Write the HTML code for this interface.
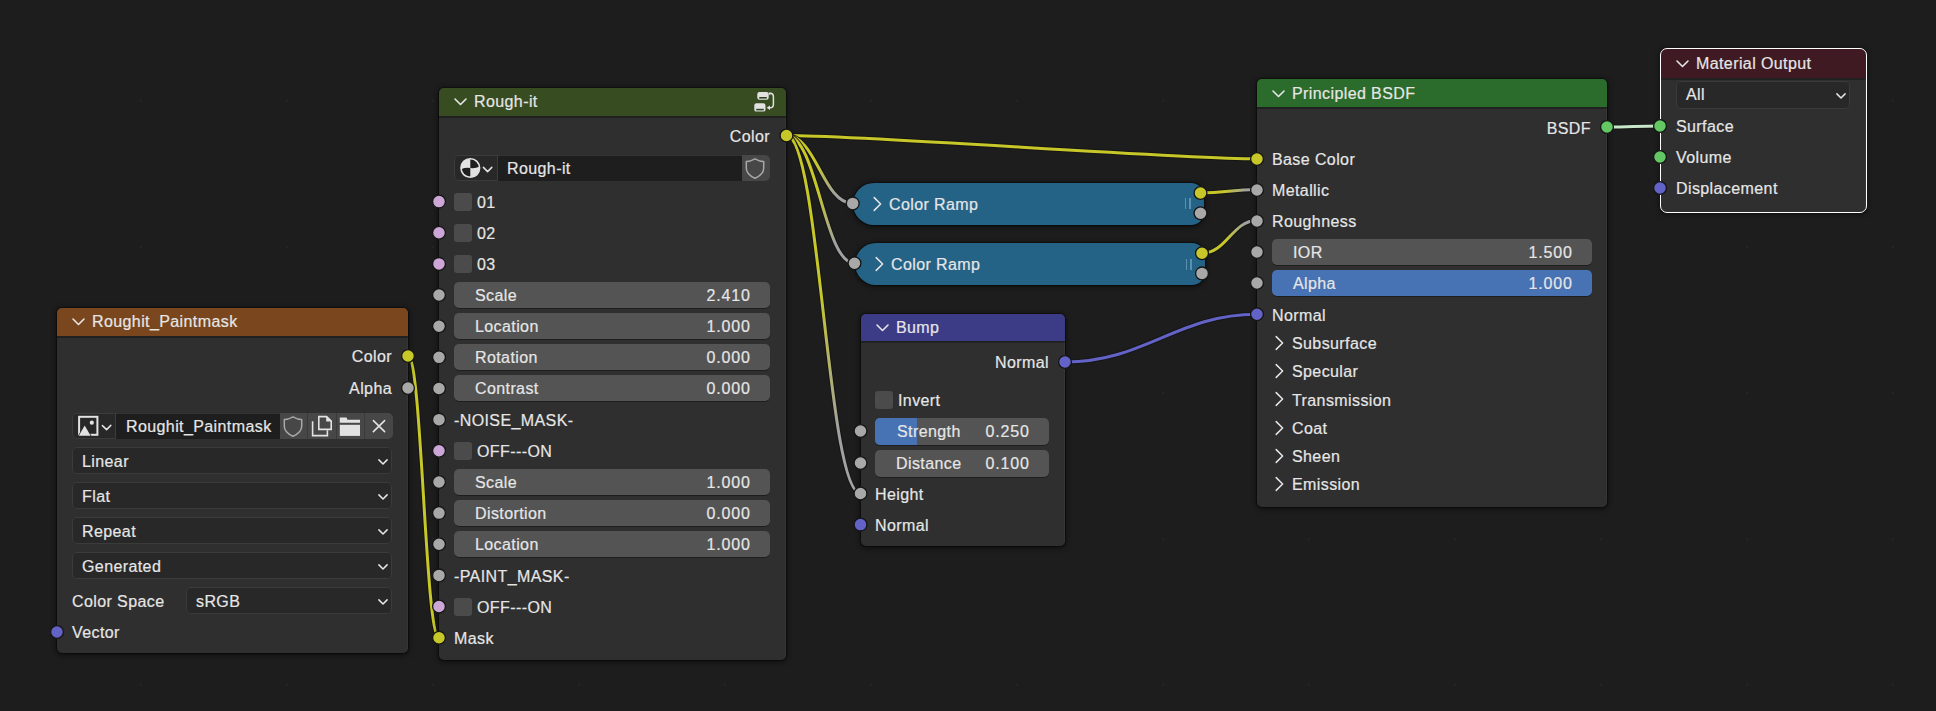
<!DOCTYPE html>
<html><head><meta charset="utf-8"><style>
html,body{margin:0;padding:0;width:1936px;height:711px;overflow:hidden;background:#1d1d1d;}
body{position:relative;font-family:"Liberation Sans", sans-serif;}
.links{position:absolute;left:0;top:0;z-index:1}
.socks{position:absolute;left:0;top:0;z-index:50}
#nodes>div,#nodes>svg{position:absolute}
#nodes{position:absolute;left:0;top:0;width:1936px;height:711px;z-index:2}
.node{background:#2f2f2f;border-radius:5px;overflow:hidden;box-shadow:0 0 0 1px rgba(0,0,0,0.3),0 1px 5px 1px rgba(0,0,0,0.55),inset -1px 0 0 rgba(255,255,255,0.035)}
.hdr{position:absolute;left:0;top:0;right:0;}
.hsep{position:absolute;left:0;right:0;height:2px;background:rgba(0,0,0,0.28)}
.sel{border:1px solid #ffffff;border-radius:7px;}
.t{position:absolute;height:20px;line-height:20px;font-size:16px;letter-spacing:0.4px;white-space:pre;color:#e6e6e6;-webkit-text-stroke:0.2px #e6e6e6}
.sl{border-radius:5px;overflow:hidden;box-shadow:0 1px 0 rgba(0,0,0,0.35)}
.cb{width:18px;height:18px;border-radius:3px;background:#4b4b4b}
.dd{background:#282828;border-radius:5px;box-shadow:inset 0 0 0 1px #3b3b3b}
.ramp{background:#256386;border-radius:21px 13px 13px 21px;box-shadow:0 0 0 1px rgba(0,0,0,0.3),0 1px 5px 1px rgba(0,0,0,0.55)}
.ic{position:absolute}
</style></head><body>
<svg class="links" width="1936" height="711"><circle cx="141.0" cy="101.0" r="1.2" fill="#252525"/><circle cx="141.0" cy="247.0" r="1.2" fill="#252525"/><circle cx="141.0" cy="393.0" r="1.2" fill="#252525"/><circle cx="141.0" cy="539.0" r="1.2" fill="#252525"/><circle cx="141.0" cy="685.0" r="1.2" fill="#252525"/><circle cx="287.0" cy="101.0" r="1.2" fill="#252525"/><circle cx="287.0" cy="247.0" r="1.2" fill="#252525"/><circle cx="287.0" cy="393.0" r="1.2" fill="#252525"/><circle cx="287.0" cy="539.0" r="1.2" fill="#252525"/><circle cx="287.0" cy="685.0" r="1.2" fill="#252525"/><circle cx="433.0" cy="101.0" r="1.2" fill="#252525"/><circle cx="433.0" cy="247.0" r="1.2" fill="#252525"/><circle cx="433.0" cy="393.0" r="1.2" fill="#252525"/><circle cx="433.0" cy="539.0" r="1.2" fill="#252525"/><circle cx="433.0" cy="685.0" r="1.2" fill="#252525"/><circle cx="579.0" cy="101.0" r="1.2" fill="#252525"/><circle cx="579.0" cy="247.0" r="1.2" fill="#252525"/><circle cx="579.0" cy="393.0" r="1.2" fill="#252525"/><circle cx="579.0" cy="539.0" r="1.2" fill="#252525"/><circle cx="579.0" cy="685.0" r="1.2" fill="#252525"/><circle cx="725.0" cy="101.0" r="1.2" fill="#252525"/><circle cx="725.0" cy="247.0" r="1.2" fill="#252525"/><circle cx="725.0" cy="393.0" r="1.2" fill="#252525"/><circle cx="725.0" cy="539.0" r="1.2" fill="#252525"/><circle cx="725.0" cy="685.0" r="1.2" fill="#252525"/><circle cx="871.0" cy="101.0" r="1.2" fill="#252525"/><circle cx="871.0" cy="247.0" r="1.2" fill="#252525"/><circle cx="871.0" cy="393.0" r="1.2" fill="#252525"/><circle cx="871.0" cy="539.0" r="1.2" fill="#252525"/><circle cx="871.0" cy="685.0" r="1.2" fill="#252525"/><circle cx="1017.0" cy="101.0" r="1.2" fill="#252525"/><circle cx="1017.0" cy="247.0" r="1.2" fill="#252525"/><circle cx="1017.0" cy="393.0" r="1.2" fill="#252525"/><circle cx="1017.0" cy="539.0" r="1.2" fill="#252525"/><circle cx="1017.0" cy="685.0" r="1.2" fill="#252525"/><circle cx="1163.0" cy="101.0" r="1.2" fill="#252525"/><circle cx="1163.0" cy="247.0" r="1.2" fill="#252525"/><circle cx="1163.0" cy="393.0" r="1.2" fill="#252525"/><circle cx="1163.0" cy="539.0" r="1.2" fill="#252525"/><circle cx="1163.0" cy="685.0" r="1.2" fill="#252525"/><circle cx="1309.0" cy="101.0" r="1.2" fill="#252525"/><circle cx="1309.0" cy="247.0" r="1.2" fill="#252525"/><circle cx="1309.0" cy="393.0" r="1.2" fill="#252525"/><circle cx="1309.0" cy="539.0" r="1.2" fill="#252525"/><circle cx="1309.0" cy="685.0" r="1.2" fill="#252525"/><circle cx="1455.0" cy="101.0" r="1.2" fill="#252525"/><circle cx="1455.0" cy="247.0" r="1.2" fill="#252525"/><circle cx="1455.0" cy="393.0" r="1.2" fill="#252525"/><circle cx="1455.0" cy="539.0" r="1.2" fill="#252525"/><circle cx="1455.0" cy="685.0" r="1.2" fill="#252525"/><circle cx="1601.0" cy="101.0" r="1.2" fill="#252525"/><circle cx="1601.0" cy="247.0" r="1.2" fill="#252525"/><circle cx="1601.0" cy="393.0" r="1.2" fill="#252525"/><circle cx="1601.0" cy="539.0" r="1.2" fill="#252525"/><circle cx="1601.0" cy="685.0" r="1.2" fill="#252525"/><circle cx="1747.0" cy="101.0" r="1.2" fill="#252525"/><circle cx="1747.0" cy="247.0" r="1.2" fill="#252525"/><circle cx="1747.0" cy="393.0" r="1.2" fill="#252525"/><circle cx="1747.0" cy="539.0" r="1.2" fill="#252525"/><circle cx="1747.0" cy="685.0" r="1.2" fill="#252525"/><circle cx="1893.0" cy="101.0" r="1.2" fill="#252525"/><circle cx="1893.0" cy="247.0" r="1.2" fill="#252525"/><circle cx="1893.0" cy="393.0" r="1.2" fill="#252525"/><circle cx="1893.0" cy="539.0" r="1.2" fill="#252525"/><circle cx="1893.0" cy="685.0" r="1.2" fill="#252525"/><path d="M408 356 C421.95 356 425.05 637.5 439 637.5" stroke="#141414" stroke-width="5.0" fill="none" stroke-opacity="0.85"/><path d="M408 356 C421.95 356 425.05 637.5 439 637.5" stroke="#c7c729" stroke-width="3.0" fill="none"/><path d="M786.5 135.5 C866.5 135.5 1177 158.8 1257 158.8" stroke="#141414" stroke-width="5.0" fill="none" stroke-opacity="0.85"/><path d="M786.5 135.5 C866.5 135.5 1177 158.8 1257 158.8" stroke="#c7c729" stroke-width="3.0" fill="none"/><linearGradient id="g2" gradientUnits="userSpaceOnUse" x1="786.5" y1="135.5" x2="852.7" y2="203.4"><stop offset="0" stop-color="#c7c729"/><stop offset="0.42" stop-color="#c7c729"/><stop offset="0.82" stop-color="#a1a1a1"/><stop offset="1" stop-color="#a1a1a1"/></linearGradient><path d="M786.5 135.5 C816.29 135.5 822.9100000000001 203.4 852.7 203.4" stroke="#141414" stroke-width="5.0" fill="none" stroke-opacity="0.85"/><path d="M786.5 135.5 C816.29 135.5 822.9100000000001 203.4 852.7 203.4" stroke="url(#g2)" stroke-width="3.0" fill="none"/><linearGradient id="g3" gradientUnits="userSpaceOnUse" x1="786.5" y1="135.5" x2="854.5" y2="263.3"><stop offset="0" stop-color="#c7c729"/><stop offset="0.42" stop-color="#c7c729"/><stop offset="0.82" stop-color="#a1a1a1"/><stop offset="1" stop-color="#a1a1a1"/></linearGradient><path d="M786.5 135.5 C817.1 135.5 823.9 263.3 854.5 263.3" stroke="#141414" stroke-width="5.0" fill="none" stroke-opacity="0.85"/><path d="M786.5 135.5 C817.1 135.5 823.9 263.3 854.5 263.3" stroke="url(#g3)" stroke-width="3.0" fill="none"/><linearGradient id="g4" gradientUnits="userSpaceOnUse" x1="786.5" y1="135.5" x2="860.5" y2="493.5"><stop offset="0" stop-color="#c7c729"/><stop offset="0.42" stop-color="#c7c729"/><stop offset="0.82" stop-color="#a1a1a1"/><stop offset="1" stop-color="#a1a1a1"/></linearGradient><path d="M786.5 135.5 C819.8 135.5 827.2 493.5 860.5 493.5" stroke="#141414" stroke-width="5.0" fill="none" stroke-opacity="0.85"/><path d="M786.5 135.5 C819.8 135.5 827.2 493.5 860.5 493.5" stroke="url(#g4)" stroke-width="3.0" fill="none"/><linearGradient id="g5" gradientUnits="userSpaceOnUse" x1="1200.5" y1="193" x2="1257" y2="189.5"><stop offset="0" stop-color="#c7c729"/><stop offset="0.42" stop-color="#c7c729"/><stop offset="0.82" stop-color="#a1a1a1"/><stop offset="1" stop-color="#a1a1a1"/></linearGradient><path d="M1200.5 193 C1225.925 193 1231.575 189.5 1257 189.5" stroke="#141414" stroke-width="5.0" fill="none" stroke-opacity="0.85"/><path d="M1200.5 193 C1225.925 193 1231.575 189.5 1257 189.5" stroke="url(#g5)" stroke-width="3.0" fill="none"/><linearGradient id="g6" gradientUnits="userSpaceOnUse" x1="1202" y1="253.2" x2="1257" y2="220.5"><stop offset="0" stop-color="#c7c729"/><stop offset="0.42" stop-color="#c7c729"/><stop offset="0.82" stop-color="#a1a1a1"/><stop offset="1" stop-color="#a1a1a1"/></linearGradient><path d="M1202 253.2 C1226.75 253.2 1232.25 220.5 1257 220.5" stroke="#141414" stroke-width="5.0" fill="none" stroke-opacity="0.85"/><path d="M1202 253.2 C1226.75 253.2 1232.25 220.5 1257 220.5" stroke="url(#g6)" stroke-width="3.0" fill="none"/><path d="M1065 362 C1145 362 1177 314.3 1257 314.3" stroke="#141414" stroke-width="5.0" fill="none" stroke-opacity="0.85"/><path d="M1065 362 C1145 362 1177 314.3 1257 314.3" stroke="#6363c7" stroke-width="3.0" fill="none"/><path d="M1607 127 C1630.85 127 1636.15 126 1660 126" stroke="#141414" stroke-width="5.0" fill="none" stroke-opacity="0.85"/><path d="M1607 127 C1630.85 127 1636.15 126 1660 126" stroke="#c8e6c8" stroke-width="3.0" fill="none"/></svg>
<div id="nodes">
<div class="node" style="left:57px;top:308px;width:351px;height:345px"><div class="hdr" style="height:28px;background:#7a461d"></div><div class="hsep" style="top:28px"></div></div>
<svg class="ic" style="left:71px;top:316.0px" width="16" height="12"><path d="M2 3 L7.5 8.5 L13 3" fill="none" stroke="#e6e6e6" stroke-width="1.6" stroke-linecap="round" stroke-linejoin="round"/></svg>
<div class="t" style="left:92px;top:312.2px;color:#e6e6e6">Roughit_Paintmask</div>
<div class="t" style="right:1544px;top:347px;color:#e6e6e6">Color</div>
<div class="t" style="right:1544px;top:379px;color:#e6e6e6">Alpha</div>
<div class="dd" style="left:72px;top:413px;width:44px;height:26px;border-radius:5px 0 0 5px;background:#282828"></div>
<div style="position:absolute;left:115px;top:413px;width:1px;height:26px;background:#3c3c3c"></div>
<div style="position:absolute;left:116px;top:413px;width:164px;height:26px;background:#1e1e1e;box-shadow:inset 0 1px 0 #333"></div>
<div style="position:absolute;left:280px;top:413px;width:113px;height:26px;background:#474747;border-radius:0 5px 5px 0"></div>
<div style="position:absolute;left:307px;top:413px;width:1px;height:26px;background:#3a3a3a"></div>
<div style="position:absolute;left:336px;top:413px;width:1px;height:26px;background:#3a3a3a"></div>
<div style="position:absolute;left:364px;top:413px;width:1px;height:26px;background:#3a3a3a"></div>
<svg class="ic" style="left:72px;top:413px" width="43" height="26" viewBox="0 0 43 26"><rect x="7.1" y="3.8" width="18.3" height="18" fill="none" stroke="#e2e2e2" stroke-width="2"/><path d="M5.6 23.6 L12.7 11.2 L19.8 23.6 Z" fill="#282828"/><path d="M6.8 22.8 L12.7 12.6 L18.6 22.8 Z" fill="#e2e2e2"/><circle cx="19.8" cy="9.7" r="2.1" fill="#e2e2e2"/><path d="M30.4 12.6 L34.6 16.6 L38.8 12.4" fill="none" stroke="#e2e2e2" stroke-width="1.5" stroke-linecap="round" stroke-linejoin="round"/></svg>
<svg class="ic" style="left:280px;top:413px" width="28" height="26" viewBox="0 0 28 26"><path d="M13 3.8 Q8.5 6.3 4.3 6.6 V13.2 C4.3 17.8 8 21 13 23.2 C18 21 21.7 17.8 21.7 13.2 V6.6 Q17.5 6.3 13 3.8 Z" fill="none" stroke="#a8a8a8" stroke-width="1.5" stroke-linejoin="round"/></svg>
<svg class="ic" style="left:307px;top:413px" width="29" height="26" viewBox="0 0 29 26"><path d="M5.6 8.3 V22.6 H20.4 V17.2" fill="none" stroke="#e2e2e2" stroke-width="1.6"/><path d="M11.8 3.6 H19.6 L24.2 8.2 V16.4 H11.8 Z" fill="none" stroke="#e2e2e2" stroke-width="1.6" stroke-linejoin="miter"/><path d="M19.2 3 L24.8 8.6 H19.2 Z" fill="#e2e2e2"/></svg>
<svg class="ic" style="left:336px;top:413px" width="29" height="26" viewBox="0 0 29 26"><path d="M3.8 4.6 H10.6 L11.4 6.8 H24 V9.8 H3.8 Z" fill="#e2e2e2"/><rect x="3.8" y="11.8" width="20.2" height="11.1" fill="#e2e2e2"/></svg>
<svg class="ic" style="left:364.5px;top:413px" width="28" height="26" viewBox="0 0 28 26"><path d="M8.4 7.6 L19.6 18.6 M19.6 7.6 L8.4 18.6" stroke="#e2e2e2" stroke-width="1.6" stroke-linecap="round"/></svg>
<div class="t" style="left:126px;top:417px;color:#e6e6e6">Roughit_Paintmask</div>
<div class="dd" style="left:72px;top:447px;width:320px;height:27px"></div>
<div class="t" style="left:82px;top:452px;color:#e6e6e6">Linear</div>
<svg class="ic" style="left:377.4px;top:457.7px" width="12" height="8"><path d="M1.9 1.9 L6 6 L10.1 1.9" fill="none" stroke="#e6e6e6" stroke-width="1.5" stroke-linecap="round" stroke-linejoin="round"/></svg>
<div class="dd" style="left:72px;top:482px;width:320px;height:27px"></div>
<div class="t" style="left:82px;top:487px;color:#e6e6e6">Flat</div>
<svg class="ic" style="left:377.4px;top:492.7px" width="12" height="8"><path d="M1.9 1.9 L6 6 L10.1 1.9" fill="none" stroke="#e6e6e6" stroke-width="1.5" stroke-linecap="round" stroke-linejoin="round"/></svg>
<div class="dd" style="left:72px;top:517px;width:320px;height:27px"></div>
<div class="t" style="left:82px;top:522px;color:#e6e6e6">Repeat</div>
<svg class="ic" style="left:377.4px;top:527.7px" width="12" height="8"><path d="M1.9 1.9 L6 6 L10.1 1.9" fill="none" stroke="#e6e6e6" stroke-width="1.5" stroke-linecap="round" stroke-linejoin="round"/></svg>
<div class="dd" style="left:72px;top:552px;width:320px;height:27px"></div>
<div class="t" style="left:82px;top:557px;color:#e6e6e6">Generated</div>
<svg class="ic" style="left:377.4px;top:562.7px" width="12" height="8"><path d="M1.9 1.9 L6 6 L10.1 1.9" fill="none" stroke="#e6e6e6" stroke-width="1.5" stroke-linecap="round" stroke-linejoin="round"/></svg>
<div class="t" style="left:72px;top:592px;color:#e6e6e6">Color Space</div>
<div class="dd" style="left:186px;top:587px;width:206px;height:27px"></div>
<div class="t" style="left:196px;top:592px;color:#e6e6e6">sRGB</div>
<svg class="ic" style="left:377.4px;top:597.7px" width="12" height="8"><path d="M1.9 1.9 L6 6 L10.1 1.9" fill="none" stroke="#e6e6e6" stroke-width="1.5" stroke-linecap="round" stroke-linejoin="round"/></svg>
<div class="t" style="left:72px;top:623px;color:#e6e6e6">Vector</div>
<div class="node" style="left:439px;top:88px;width:347px;height:572px"><div class="hdr" style="height:28px;background:#374c21"></div><div class="hsep" style="top:28px"></div></div>
<svg class="ic" style="left:453px;top:96.0px" width="16" height="12"><path d="M2 3 L7.5 8.5 L13 3" fill="none" stroke="#e6e6e6" stroke-width="1.6" stroke-linecap="round" stroke-linejoin="round"/></svg>
<div class="t" style="left:474px;top:92.2px;color:#e6e6e6">Rough-it</div>
<div class="t" style="right:1166px;top:127px;color:#e6e6e6">Color</div>
<div class="dd" style="left:454px;top:155px;width:44px;height:26px;border-radius:5px 0 0 5px;background:#282828"></div>
<div style="position:absolute;left:497px;top:155px;width:1px;height:26px;background:#3c3c3c"></div>
<div style="position:absolute;left:498px;top:155px;width:244px;height:26px;background:#1e1e1e;box-shadow:inset 0 1px 0 #333"></div>
<div style="position:absolute;left:742px;top:155px;width:28px;height:26px;background:#474747;border-radius:0 5px 5px 0"></div>
<svg class="ic" style="left:454px;top:155px" width="43" height="26" viewBox="0 0 43 26"><circle cx="16.3" cy="13" r="9.3" fill="#1e1e1e" stroke="#e2e2e2" stroke-width="1.6"/><path d="M16.3 13 V3.7 A9.3 9.3 0 0 0 7.1 14.3 Q11 12.4 16.3 13 Z" fill="#e2e2e2"/><path d="M16.3 13 V22.3 A9.3 9.3 0 0 0 25.5 11.8 Q21 13.6 16.3 13 Z" fill="#e2e2e2"/><path d="M29.4 12.4 L33.6 16.6 L37.8 12.4" fill="none" stroke="#e2e2e2" stroke-width="1.5" stroke-linecap="round" stroke-linejoin="round"/></svg>
<svg class="ic" style="left:742px;top:155px" width="28" height="26" viewBox="0 0 28 26"><path d="M13 3.8 Q8.5 6.3 4.3 6.6 V13.2 C4.3 17.8 8 21 13 23.2 C18 21 21.7 17.8 21.7 13.2 V6.6 Q17.5 6.3 13 3.8 Z" fill="none" stroke="#a8a8a8" stroke-width="1.5" stroke-linejoin="round"/></svg>
<svg class="ic" style="left:748px;top:88px" width="32" height="28" viewBox="0 0 32 28"><rect x="9.3" y="3.9" width="11.4" height="7.8" rx="2.2" fill="#e2e2e2"/><rect x="11.2" y="9" width="7.6" height="1.6" fill="#2f4520"/><rect x="6.3" y="15.3" width="11.2" height="8.3" rx="2.2" fill="#e2e2e2"/><rect x="8.2" y="20.8" width="7.6" height="1.6" fill="#2f4520"/><path d="M22 5.2 Q25.4 5.2 25.4 8.5 V16.5 Q25.4 19.8 22 19.8 H20.5" fill="none" stroke="#e2e2e2" stroke-width="1.5"/><path d="M18.6 19.8 L22 17.6 V22 Z" fill="#e2e2e2"/><path d="M22.2 4 L22.2 7.8 L20.4 5.2 Z" fill="#e2e2e2"/></svg>
<div class="t" style="left:507px;top:159px;color:#e6e6e6">Rough-it</div>
<div class="cb" style="left:454px;top:192.6px"></div>
<div class="t" style="left:477px;top:193px;color:#e6e6e6">01</div>
<div class="cb" style="left:454px;top:223.75px"></div>
<div class="t" style="left:477px;top:224px;color:#e6e6e6">02</div>
<div class="cb" style="left:454px;top:254.89999999999998px"></div>
<div class="t" style="left:477px;top:255px;color:#e6e6e6">03</div>
<div class="sl" style="left:454px;top:282px;width:316px;height:26px;background:#545454">
</div>
<div class="t" style="left:475px;top:286px;color:#e6e6e6">Scale</div>
<div class="t" style="right:1185.2px;top:286px;color:#e6e6e6;letter-spacing:0.85px">2.410</div>
<div class="sl" style="left:454px;top:313px;width:316px;height:26px;background:#545454">
</div>
<div class="t" style="left:475px;top:317px;color:#e6e6e6">Location</div>
<div class="t" style="right:1185.2px;top:317px;color:#e6e6e6;letter-spacing:0.85px">1.000</div>
<div class="sl" style="left:454px;top:344px;width:316px;height:26px;background:#545454">
</div>
<div class="t" style="left:475px;top:348px;color:#e6e6e6">Rotation</div>
<div class="t" style="right:1185.2px;top:348px;color:#e6e6e6;letter-spacing:0.85px">0.000</div>
<div class="sl" style="left:454px;top:375px;width:316px;height:26px;background:#545454">
</div>
<div class="t" style="left:475px;top:379px;color:#e6e6e6">Contrast</div>
<div class="t" style="right:1185.2px;top:379px;color:#e6e6e6;letter-spacing:0.85px">0.000</div>
<div class="t" style="left:454px;top:411px;color:#e6e6e6">-NOISE_MASK-</div>
<div class="cb" style="left:454px;top:441.79999999999995px"></div>
<div class="t" style="left:477px;top:442px;color:#e6e6e6">OFF---ON</div>
<div class="sl" style="left:454px;top:469px;width:316px;height:26px;background:#545454">
</div>
<div class="t" style="left:475px;top:473px;color:#e6e6e6">Scale</div>
<div class="t" style="right:1185.2px;top:473px;color:#e6e6e6;letter-spacing:0.85px">1.000</div>
<div class="sl" style="left:454px;top:500px;width:316px;height:26px;background:#545454">
</div>
<div class="t" style="left:475px;top:504px;color:#e6e6e6">Distortion</div>
<div class="t" style="right:1185.2px;top:504px;color:#e6e6e6;letter-spacing:0.85px">0.000</div>
<div class="sl" style="left:454px;top:531px;width:316px;height:26px;background:#545454">
</div>
<div class="t" style="left:475px;top:535px;color:#e6e6e6">Location</div>
<div class="t" style="right:1185.2px;top:535px;color:#e6e6e6;letter-spacing:0.85px">1.000</div>
<div class="t" style="left:454px;top:567px;color:#e6e6e6">-PAINT_MASK-</div>
<div class="cb" style="left:454px;top:597.55px"></div>
<div class="t" style="left:477px;top:598px;color:#e6e6e6">OFF---ON</div>
<div class="t" style="left:454px;top:629px;color:#e6e6e6">Mask</div>
<div class="ramp" style="left:853px;top:182.5px;width:351px;height:42.5px"></div>
<svg class="ic" style="left:872px;top:195.75px" width="12" height="16"><path d="M2.2 1.6 L8.6 8 L2.2 14.4" fill="none" stroke="#e6e6e6" stroke-width="1.5" stroke-linecap="round" stroke-linejoin="round"/></svg>
<div class="t" style="left:889px;top:195px;color:#e6e6e6">Color Ramp</div>
<div style="position:absolute;left:1184.5px;top:198.25px;width:1.5px;height:11px;background:#5a90b0"></div>
<div style="position:absolute;left:1189px;top:198.25px;width:1.5px;height:11px;background:#5a90b0"></div>
<div class="ramp" style="left:855px;top:243px;width:350px;height:42px"></div>
<svg class="ic" style="left:874px;top:256.0px" width="12" height="16"><path d="M2.2 1.6 L8.6 8 L2.2 14.4" fill="none" stroke="#e6e6e6" stroke-width="1.5" stroke-linecap="round" stroke-linejoin="round"/></svg>
<div class="t" style="left:891px;top:255px;color:#e6e6e6">Color Ramp</div>
<div style="position:absolute;left:1185.5px;top:258.5px;width:1.5px;height:11px;background:#5a90b0"></div>
<div style="position:absolute;left:1190px;top:258.5px;width:1.5px;height:11px;background:#5a90b0"></div>
<div class="node" style="left:861px;top:313.5px;width:204px;height:232.5px"><div class="hdr" style="height:27.5px;background:#3b3b86"></div><div class="hsep" style="top:27.5px"></div></div>
<svg class="ic" style="left:875px;top:322.05px" width="16" height="12"><path d="M2 3 L7.5 8.5 L13 3" fill="none" stroke="#e6e6e6" stroke-width="1.6" stroke-linecap="round" stroke-linejoin="round"/></svg>
<div class="t" style="left:896px;top:318.25px;color:#e6e6e6">Bump</div>
<div class="t" style="right:887px;top:353px;color:#e6e6e6">Normal</div>
<div class="cb" style="left:875px;top:391px"></div>
<div class="t" style="left:898px;top:391px;color:#e6e6e6">Invert</div>
<div class="sl" style="left:875px;top:417.5px;width:174px;height:27.5px;background:#545454">
<div style="position:absolute;left:0;top:0;bottom:0;width:42px;background:#4772b3"></div>
</div>
<div class="t" style="left:897px;top:422px;color:#e6e6e6">Strength</div>
<div class="t" style="right:906.2px;top:422px;color:#e6e6e6;letter-spacing:0.85px">0.250</div>
<div class="sl" style="left:875px;top:449.5px;width:174px;height:27px;background:#545454">
</div>
<div class="t" style="left:896px;top:454px;color:#e6e6e6">Distance</div>
<div class="t" style="right:906.2px;top:454px;color:#e6e6e6;letter-spacing:0.85px">0.100</div>
<div class="t" style="left:875px;top:485px;color:#e6e6e6">Height</div>
<div class="t" style="left:875px;top:516px;color:#e6e6e6">Normal</div>
<div class="node" style="left:1257px;top:79px;width:350px;height:428px"><div class="hdr" style="height:28px;background:#2b6b2b"></div><div class="hsep" style="top:28px"></div></div>
<svg class="ic" style="left:1271px;top:87.9px" width="16" height="12"><path d="M2 3 L7.5 8.5 L13 3" fill="none" stroke="#e6e6e6" stroke-width="1.6" stroke-linecap="round" stroke-linejoin="round"/></svg>
<div class="t" style="left:1292px;top:84.10000000000001px;color:#e6e6e6">Principled BSDF</div>
<div class="t" style="right:345px;top:119px;color:#e6e6e6">BSDF</div>
<div class="t" style="left:1272px;top:150px;color:#e6e6e6">Base Color</div>
<div class="t" style="left:1272px;top:181px;color:#e6e6e6">Metallic</div>
<div class="t" style="left:1272px;top:212px;color:#e6e6e6">Roughness</div>
<div class="sl" style="left:1272px;top:239px;width:320px;height:26px;background:#545454">
</div>
<div class="t" style="left:1293px;top:243px;color:#e6e6e6">IOR</div>
<div class="t" style="right:363.20000000000005px;top:243px;color:#e6e6e6;letter-spacing:0.85px">1.500</div>
<div class="sl" style="left:1272px;top:270px;width:320px;height:26px;background:#4772b3">
</div>
<div class="t" style="left:1293px;top:274px;color:#e6e6e6">Alpha</div>
<div class="t" style="right:363.20000000000005px;top:274px;color:#e6e6e6;letter-spacing:0.85px">1.000</div>
<div class="t" style="left:1272px;top:306px;color:#e6e6e6">Normal</div>
<svg class="ic" style="left:1274px;top:335.0px" width="12" height="16"><path d="M2.2 1.6 L8.6 8 L2.2 14.4" fill="none" stroke="#e6e6e6" stroke-width="1.5" stroke-linecap="round" stroke-linejoin="round"/></svg>
<div class="t" style="left:1292px;top:334px;color:#e6e6e6">Subsurface</div>
<svg class="ic" style="left:1274px;top:363.2px" width="12" height="16"><path d="M2.2 1.6 L8.6 8 L2.2 14.4" fill="none" stroke="#e6e6e6" stroke-width="1.5" stroke-linecap="round" stroke-linejoin="round"/></svg>
<div class="t" style="left:1292px;top:362px;color:#e6e6e6">Specular</div>
<svg class="ic" style="left:1274px;top:391.4px" width="12" height="16"><path d="M2.2 1.6 L8.6 8 L2.2 14.4" fill="none" stroke="#e6e6e6" stroke-width="1.5" stroke-linecap="round" stroke-linejoin="round"/></svg>
<div class="t" style="left:1292px;top:391px;color:#e6e6e6">Transmission</div>
<svg class="ic" style="left:1274px;top:419.6px" width="12" height="16"><path d="M2.2 1.6 L8.6 8 L2.2 14.4" fill="none" stroke="#e6e6e6" stroke-width="1.5" stroke-linecap="round" stroke-linejoin="round"/></svg>
<div class="t" style="left:1292px;top:419px;color:#e6e6e6">Coat</div>
<svg class="ic" style="left:1274px;top:447.8px" width="12" height="16"><path d="M2.2 1.6 L8.6 8 L2.2 14.4" fill="none" stroke="#e6e6e6" stroke-width="1.5" stroke-linecap="round" stroke-linejoin="round"/></svg>
<div class="t" style="left:1292px;top:447px;color:#e6e6e6">Sheen</div>
<svg class="ic" style="left:1274px;top:476.0px" width="12" height="16"><path d="M2.2 1.6 L8.6 8 L2.2 14.4" fill="none" stroke="#e6e6e6" stroke-width="1.5" stroke-linecap="round" stroke-linejoin="round"/></svg>
<div class="t" style="left:1292px;top:475px;color:#e6e6e6">Emission</div>
<div class="node" style="left:1661px;top:49px;width:205px;height:163px"><div class="hdr" style="height:29px;background:#3f1a22"></div><div class="hsep" style="top:29px"></div></div>
<div class="sel" style="left:1660px;top:48px;width:205px;height:163px"></div>
<svg class="ic" style="left:1675px;top:57.5px" width="16" height="12"><path d="M2 3 L7.5 8.5 L13 3" fill="none" stroke="#e6e6e6" stroke-width="1.6" stroke-linecap="round" stroke-linejoin="round"/></svg>
<div class="t" style="left:1696px;top:53.7px;color:#e6e6e6">Material Output</div>
<div class="dd" style="left:1676px;top:80.5px;width:174px;height:28px"></div>
<div class="t" style="left:1686px;top:85px;color:#e6e6e6">All</div>
<svg class="ic" style="left:1835.4px;top:91.7px" width="12" height="8"><path d="M1.9 1.9 L6 6 L10.1 1.9" fill="none" stroke="#e6e6e6" stroke-width="1.5" stroke-linecap="round" stroke-linejoin="round"/></svg>
<div class="t" style="left:1676px;top:117px;color:#e6e6e6">Surface</div>
<div class="t" style="left:1676px;top:148px;color:#e6e6e6">Volume</div>
<div class="t" style="left:1676px;top:179px;color:#e6e6e6">Displacement</div>
</div>
<svg class="socks" width="1936" height="711"><circle cx="408" cy="356" r="6.4" fill="#c7c729" stroke="#151515" stroke-width="1.3"/><circle cx="408" cy="388" r="6.4" fill="#a8a8a8" stroke="#151515" stroke-width="1.3"/><circle cx="57" cy="632" r="6.4" fill="#6363c7" stroke="#151515" stroke-width="1.3"/><circle cx="786.5" cy="135.5" r="6.4" fill="#c7c729" stroke="#151515" stroke-width="1.3"/><circle cx="439" cy="201.6" r="6.4" fill="#cca6d6" stroke="#151515" stroke-width="1.3"/><circle cx="439" cy="232.75" r="6.4" fill="#cca6d6" stroke="#151515" stroke-width="1.3"/><circle cx="439" cy="263.9" r="6.4" fill="#cca6d6" stroke="#151515" stroke-width="1.3"/><circle cx="439" cy="295.04999999999995" r="6.4" fill="#a8a8a8" stroke="#151515" stroke-width="1.3"/><circle cx="439" cy="326.2" r="6.4" fill="#a8a8a8" stroke="#151515" stroke-width="1.3"/><circle cx="439" cy="357.35" r="6.4" fill="#a8a8a8" stroke="#151515" stroke-width="1.3"/><circle cx="439" cy="388.5" r="6.4" fill="#a8a8a8" stroke="#151515" stroke-width="1.3"/><circle cx="439" cy="419.65" r="6.4" fill="#a8a8a8" stroke="#151515" stroke-width="1.3"/><circle cx="439" cy="450.79999999999995" r="6.4" fill="#cca6d6" stroke="#151515" stroke-width="1.3"/><circle cx="439" cy="481.94999999999993" r="6.4" fill="#a8a8a8" stroke="#151515" stroke-width="1.3"/><circle cx="439" cy="513.1" r="6.4" fill="#a8a8a8" stroke="#151515" stroke-width="1.3"/><circle cx="439" cy="544.25" r="6.4" fill="#a8a8a8" stroke="#151515" stroke-width="1.3"/><circle cx="439" cy="575.4" r="6.4" fill="#a8a8a8" stroke="#151515" stroke-width="1.3"/><circle cx="439" cy="606.55" r="6.4" fill="#cca6d6" stroke="#151515" stroke-width="1.3"/><circle cx="439" cy="637.6999999999999" r="6.4" fill="#c7c729" stroke="#151515" stroke-width="1.3"/><circle cx="852.7" cy="203.4" r="6.4" fill="#a8a8a8" stroke="#151515" stroke-width="1.3"/><circle cx="1200.5" cy="193" r="6.4" fill="#c7c729" stroke="#151515" stroke-width="1.3"/><circle cx="1200.5" cy="213.3" r="6.4" fill="#a8a8a8" stroke="#151515" stroke-width="1.3"/><circle cx="854.5" cy="263.3" r="6.4" fill="#a8a8a8" stroke="#151515" stroke-width="1.3"/><circle cx="1202" cy="253.2" r="6.4" fill="#c7c729" stroke="#151515" stroke-width="1.3"/><circle cx="1202" cy="273.4" r="6.4" fill="#a8a8a8" stroke="#151515" stroke-width="1.3"/><circle cx="1065" cy="362" r="6.4" fill="#6363c7" stroke="#151515" stroke-width="1.3"/><circle cx="860.5" cy="431" r="6.4" fill="#a8a8a8" stroke="#151515" stroke-width="1.3"/><circle cx="860.5" cy="463" r="6.4" fill="#a8a8a8" stroke="#151515" stroke-width="1.3"/><circle cx="860.5" cy="493.5" r="6.4" fill="#a8a8a8" stroke="#151515" stroke-width="1.3"/><circle cx="860.5" cy="524.6" r="6.4" fill="#6363c7" stroke="#151515" stroke-width="1.3"/><circle cx="1607" cy="127" r="6.4" fill="#63c763" stroke="#151515" stroke-width="1.3"/><circle cx="1257" cy="159" r="6.4" fill="#c7c729" stroke="#151515" stroke-width="1.3"/><circle cx="1257" cy="190" r="6.4" fill="#a8a8a8" stroke="#151515" stroke-width="1.3"/><circle cx="1257" cy="221" r="6.4" fill="#a8a8a8" stroke="#151515" stroke-width="1.3"/><circle cx="1257" cy="252" r="6.4" fill="#a8a8a8" stroke="#151515" stroke-width="1.3"/><circle cx="1257" cy="283" r="6.4" fill="#a8a8a8" stroke="#151515" stroke-width="1.3"/><circle cx="1257" cy="314.3" r="6.4" fill="#6363c7" stroke="#151515" stroke-width="1.3"/><circle cx="1660" cy="126" r="6.4" fill="#63c763" stroke="#151515" stroke-width="1.3"/><circle cx="1660" cy="157" r="6.4" fill="#63c763" stroke="#151515" stroke-width="1.3"/><circle cx="1660" cy="188" r="6.4" fill="#6363c7" stroke="#151515" stroke-width="1.3"/></svg>
</body></html>
